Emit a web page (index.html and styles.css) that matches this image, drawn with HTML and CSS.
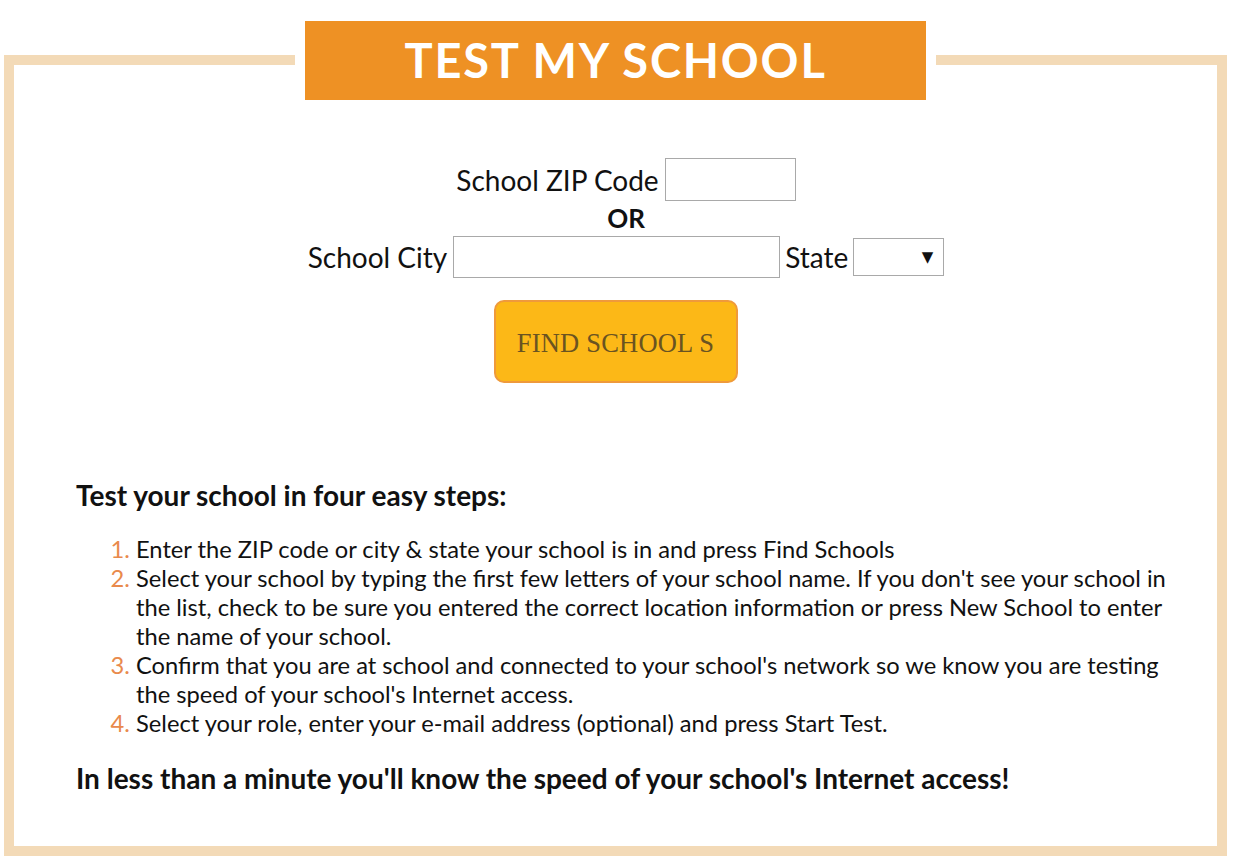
FILE: index.html
```html
<!DOCTYPE html>
<html lang="en">
<head>
<meta charset="utf-8">
<title>Test My School</title>
<link rel="stylesheet" href="styles.css">
</head>
<body>
<div class="frame">
  <div class="title-wrap">
    <h1 class="title">TEST MY SCHOOL</h1>
  </div>
  <form class="search">
    <div class="row row-zip">
      <label class="lbl" for="zip">School ZIP Code</label>
      <input class="field field-zip" id="zip" type="text">
    </div>
    <div class="or">OR</div>
    <div class="row row-city">
      <label class="lbl" for="city">School City</label>
      <input class="field field-city" id="city" type="text">
      <label class="lbl">State</label>
      <div class="select"><span class="arrow">&#9660;</span></div>
    </div>
    <div class="row row-btn">
      <button class="find" type="button">FIND SCHOOL S</button>
    </div>
  </form>
  <div class="steps">
    <h2 class="steps-title">Test your school in four easy steps:</h2>
    <ol class="steps-list">
      <li>Enter the ZIP code or city &amp; state your school is in and press Find Schools</li>
      <li>Select your school by typing the first few letters of your school name. If you don't see your school in the list, check to be sure you entered the correct location information or press New School to enter the name of your school.</li>
      <li>Confirm that you are at school and connected to your school's network so we know you are testing the speed of your school's Internet access.</li>
      <li>Select your role, enter your e-mail address (optional) and press Start Test.</li>
    </ol>
    <p class="closing">In less than a minute you'll know the speed of your school's Internet access!</p>
  </div>
</div>
</body>
</html>
```
FILE: styles.css
```css
html, body {
  margin: 0;
  padding: 0;
  background: #ffffff;
}
body {
  font-family: Lato, "Open Sans", "Liberation Sans", sans-serif;
  color: #111111;
  width: 1238px;
  height: 866px;
  overflow: hidden;
}
.frame {
  box-sizing: border-box;
  margin: 55px 0 0 4px;
  width: 1223px;
  height: 801px;
  border: 10px solid #f3dab7;
  display: flex;
  flex-direction: column;
}
.title-wrap {
  align-self: center;
  margin-top: -44px;
  padding: 0 10px;
  background: #ffffff;
}
.title {
  margin: 0;
  width: 621px;
  height: 79px;
  background: #ee9124;
  color: #ffffff;
  font-size: 47px;
  font-weight: 700;
  letter-spacing: 1.8px;
  line-height: 79px;
  text-align: center;
}
.search {
  margin: 58px 0 0;
  display: flex;
  flex-direction: column;
  align-items: center;
}
.row {
  display: flex;
  align-items: center;
  justify-content: center;
}
.row-zip,
.row-city,
.or {
  margin-left: 21px;
}
.lbl {
  font-size: 28px;
  color: #111111;
}
.field {
  box-sizing: border-box;
  border: 1px solid #a9a9a9;
  background: #ffffff;
  height: 43px;
  margin: 0 5px 0 6px;
  padding: 0;
}
.field-zip {
  width: 131px;
  margin-right: 0;
}
.field-city {
  width: 327px;
  height: 42px;
}
.or {
  font-size: 26px;
  font-weight: 700;
  line-height: 34px;
  height: 34px;
  margin-top: 0;
}
.row-city {
  margin-top: 1px;
}
.select {
  box-sizing: border-box;
  width: 91px;
  height: 38px;
  margin-left: 5px;
  border: 1px solid #a9a9a9;
  display: flex;
  align-items: center;
  justify-content: flex-end;
  padding-right: 10px;
}
.arrow {
  font-family: "DejaVu Sans", sans-serif;
  font-size: 15px;
  color: #111111;
}
.row-btn {
  margin-top: 22px;
}
.find {
  box-sizing: border-box;
  width: 244px;
  height: 83px;
  background: #fcb817;
  border: 2px solid #ef9a3b;
  border-radius: 10px;
  font-family: "Liberation Serif", "Times New Roman", serif;
  font-size: 26.5px;
  color: #6a5321;
  letter-spacing: 0.2px;
  padding: 4px 0 0;
}
.steps {
  padding: 0 40px 0 62px;
  margin-top: 97px;
}
.steps-title {
  margin: 0;
  font-size: 28px;
  font-weight: 700;
  line-height: 30px;
}
.steps-list {
  margin: 25px 0 0;
  padding-left: 60px;
  font-size: 23.7px;
  line-height: 29px;
}
.steps-list li::marker {
  color: #e98a4c;
}
.closing {
  margin: 25px 0 0;
  font-size: 28px;
  font-weight: 700;
  line-height: 30px;
}
```
